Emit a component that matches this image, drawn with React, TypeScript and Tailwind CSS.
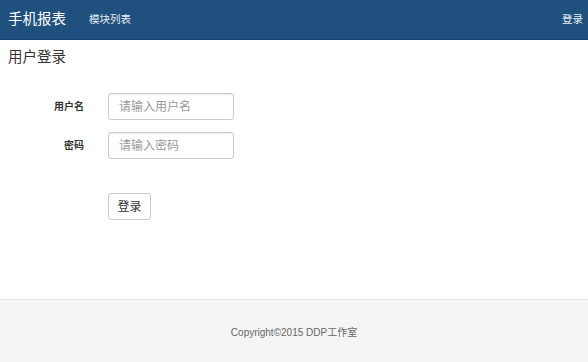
import { useState } from 'react';

const font = { fontFamily: '"Liberation Sans", "Noto Sans CJK SC", sans-serif' };

function Field({ label, placeholder, type = 'text' }: { label: string; placeholder: string; type?: string }) {
  const [value, setValue] = useState('');
  return (
    <div className="flex items-center">
      <label className="w-[84px] text-right text-[10px] font-bold text-[#333]">{label}</label>
      <input
        type={type}
        value={value}
        placeholder={placeholder}
        onChange={(e) => setValue(e.target.value)}
        className="ml-[24px] h-[27px] w-[126px] rounded-[3px] border border-[#ccc] px-[10px] text-[12px] text-[#555] placeholder:text-[#999] outline-none shadow-[inset_0_1px_1px_rgba(0,0,0,0.075)]"
      />
    </div>
  );
}

export default function App() {
  return (
    <div className="flex min-h-screen flex-col bg-white" style={font}>
      {/* Navbar */}
      <nav className="flex h-[40px] items-center border-b border-[#1a4470] bg-[#20507e] text-white">
        <span className="ml-[8px] text-[14.5px] leading-none">手机报表</span>
        <a className="ml-[23px] text-[10.5px] text-[#e8eef5]">模块列表</a>
        <a className="ml-auto mr-[5px] text-[10.5px] text-[#e8eef5]">登录</a>
      </nav>

      <main className="flex-1">
        <h4 className="ml-[8px] mt-[7px] text-[14.5px] leading-[20px] text-[#333]">用户登录</h4>

        <form className="mt-[26px] flex flex-col gap-[12px]" onSubmit={(e) => e.preventDefault()}>
          <Field label="用户名" placeholder="请输入用户名" />
          <Field label="密码" placeholder="请输入密码" type="password" />
          <div className="mt-[22px] pl-[108px]">
            <button
              type="submit"
              className="h-[27px] w-[43px] rounded-[3px] border border-[#ccc] bg-white text-[12px] text-[#333]"
            >
              登录
            </button>
          </div>
        </form>
      </main>

      {/* Footer */}
      <footer className="flex h-[63px] items-center justify-center border-t border-[#e5e5e5] bg-[#f5f5f5] pt-[2px]">
        <span className="text-[10px] text-[#666]">Copyright©2015 DDP工作室</span>
      </footer>
    </div>
  );
}
